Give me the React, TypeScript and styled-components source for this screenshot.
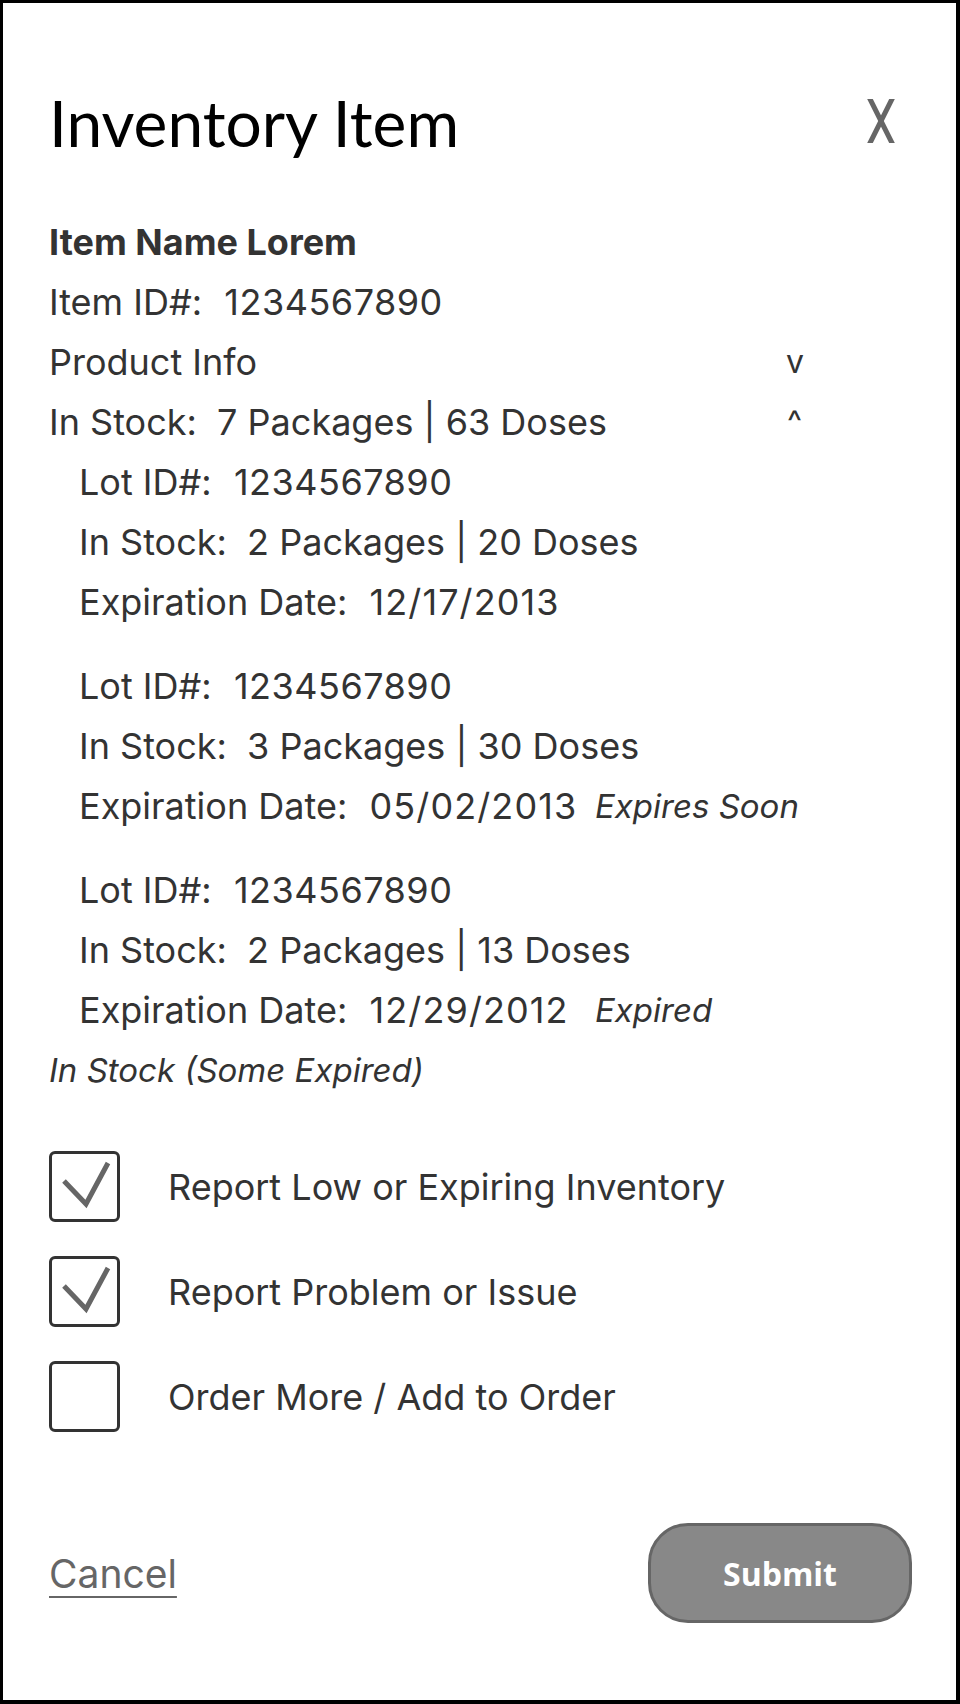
import * as React from "react";
import styled, { createGlobalStyle } from "styled-components";

interface ILot {
  id: string;
  packages: number;
  doses: number;
  expires: string;
  note?: string;
}

const lots: ILot[] = [
  { id: "1234567890", packages: 2, doses: 20, expires: "12/17/2013" },
  { id: "1234567890", packages: 3, doses: 30, expires: "05/02/2013", note: "Expires Soon" },
  { id: "1234567890", packages: 2, doses: 13, expires: "12/29/2012", note: "Expired" }
];

const options = [
  { label: "Report Low or Expiring Inventory", checked: true },
  { label: "Report Problem or Issue", checked: true },
  { label: "Order More / Add to Order", checked: false }
];

const CloseIcon = () => (
  <svg width="30" height="44" viewBox="0 0 30 44">
    <line x1="3" y1="-2" x2="27" y2="46" stroke="#666" strokeWidth="5" />
    <line x1="27" y1="-2" x2="3" y2="46" stroke="#666" strokeWidth="5" />
  </svg>
);

const Check = () => (
  <svg width="65" height="65" viewBox="3 3 65 65">
    <path d="M15 30 L37 53 L59 12" fill="none" stroke="#666" strokeWidth="5" />
  </svg>
);

export default function App() {
  return (
    <>
      <GlobalStyle />
      <Frame>
        <Header>
          <Title>Inventory Item</Title>
          <CloseButton>
            <CloseIcon />
          </CloseButton>
        </Header>

        <Info>
          <Line bold>Item Name Lorem</Line>
          <Line>
            {"Item ID#:  "}
            <Value>1234567890</Value>
          </Line>
          <ToggleLine>
            <span>Product Info</span>
            <Chevron>v</Chevron>
          </ToggleLine>
          <ToggleLine>
            <span>{"In Stock:  7 Packages | 63 Doses"}</span>
            <Chevron up>^</Chevron>
          </ToggleLine>
          {lots.map((lot, i) => (
            <Lot key={i}>
              <Line>
                {"Lot ID#:  "}
                <Value>{lot.id}</Value>
              </Line>
              <Line>{`In Stock:  ${lot.packages} Packages | ${lot.doses} Doses`}</Line>
              <DateLine>
                <span>
                  {"Expiration Date:  "}
                  <Value wide>{lot.expires}</Value>
                </span>
                {lot.note && <Note>{lot.note}</Note>}
              </DateLine>
            </Lot>
          ))}
          <Status>In Stock (Some Expired)</Status>
        </Info>

        <Options>
          {options.map((o) => (
            <Option key={o.label}>
              <Box>{o.checked && <Check />}</Box>
              <span>{o.label}</span>
            </Option>
          ))}
        </Options>

        <Footer>
          <Cancel>Cancel</Cancel>
          <Submit>Submit</Submit>
        </Footer>
      </Frame>
    </>
  );
}

const GlobalStyle = createGlobalStyle`
  html, body {
    margin: 0;
    padding: 0;
    background: #fff;
  }
  * {
    box-sizing: border-box;
  }
`;

const Frame = styled.div`
  width: 960px;
  height: 1704px;
  border: solid #000;
  border-width: 3px 4px 4px 3px;
  padding: 83px 44px 0 46px;
  background: #fff;
  font-family: Inter, "Liberation Sans", sans-serif;
  color: #333;
`;

const Header = styled.div`
  display: flex;
  justify-content: space-between;
  align-items: flex-start;
`;

const Title = styled.h1`
  margin: 0;
  font-family: Lato, "Liberation Sans", sans-serif;
  font-weight: 400;
  font-size: 64px;
  line-height: 74px;
  color: #000;
`;

const CloseButton = styled.div`
  margin: 13px 16px 0 0;
  width: 30px;
  height: 44px;
  cursor: pointer;
  svg {
    display: block;
  }
`;

const Info = styled.div`
  margin-top: 52px;
  font-size: 36px;
  line-height: 60px;
`;

const Line = styled.div<{ bold?: boolean }>`
  white-space: pre;
  font-weight: ${(p) => (p.bold ? 700 : 400)};
`;

const Value = styled.span<{ wide?: boolean }>`
  margin-left: 2px;
  letter-spacing: ${(p) => (p.wide ? "1.1px" : "0.5px")};
`;

const ToggleLine = styled.div`
  width: 755px;
  display: flex;
  justify-content: space-between;
  white-space: pre;
`;

const Chevron = styled.span<{ up?: boolean }>`
  font-size: 32px;
  margin-right: ${(p) => (p.up ? "2px" : "0")};
`;

const Lot = styled.div`
  padding-left: 30px;
  & + & {
    margin-top: 24px;
  }
`;

const DateLine = styled.div`
  display: grid;
  grid-template-columns: 516px auto;
  white-space: pre;
`;

const Note = styled.span`
  font-style: italic;
  font-size: 33px;
`;

const Status = styled.div`
  font-style: italic;
  font-size: 33px;
`;

const Options = styled.div`
  margin-top: 51px;
  display: flex;
  flex-direction: column;
  gap: 34px;
`;

const Option = styled.label`
  display: flex;
  align-items: center;
  gap: 48px;
  font-size: 36px;
`;

const Box = styled.div`
  width: 71px;
  height: 71px;
  border: 3px solid #333;
  border-radius: 6px;
  svg {
    display: block;
  }
`;

const Footer = styled.div`
  margin-top: 91px;
  display: flex;
  justify-content: space-between;
  align-items: center;
`;

const Cancel = styled.a`
  font-size: 39px;
  color: #666;
  text-decoration: underline;
  text-decoration-thickness: 2px;
  text-underline-offset: 8px;
  cursor: pointer;
`;

const Submit = styled.button`
  width: 264px;
  height: 100px;
  border: 3px solid #666;
  border-radius: 40px;
  background: #888;
  color: #fff;
  font-family: "Open Sans", "Liberation Sans", sans-serif;
  font-weight: 700;
  font-size: 32px;
  cursor: pointer;
`;
